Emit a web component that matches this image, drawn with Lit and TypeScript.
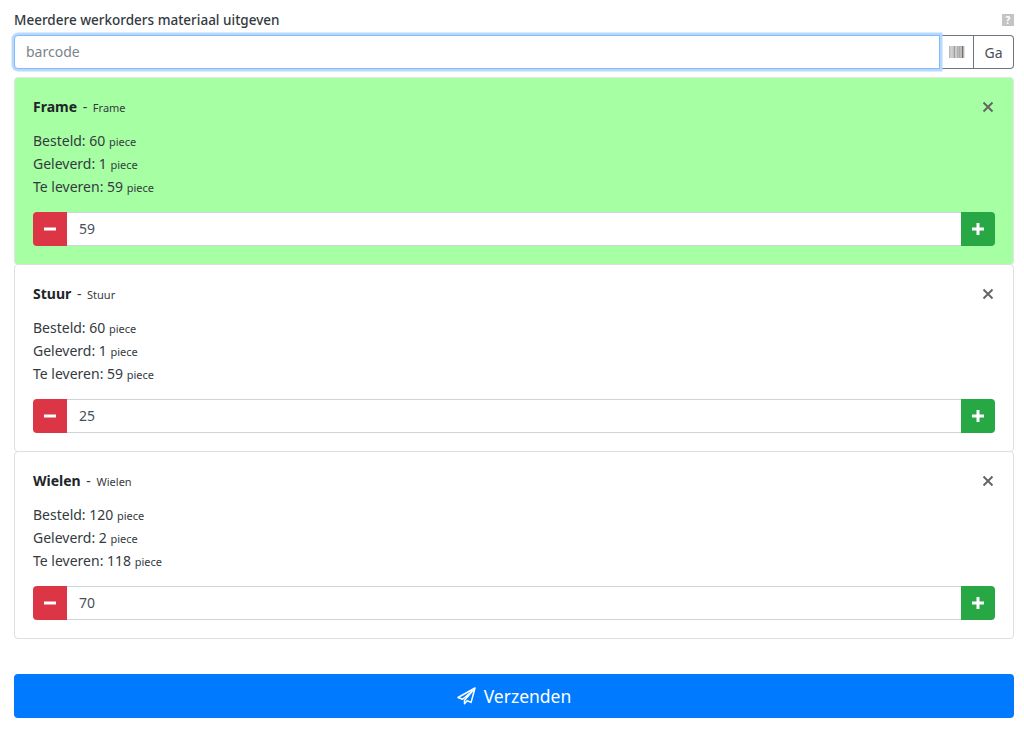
import { LitElement, html, css, svg } from "lit";
import { customElement } from "lit/decorators.js";

const items = [
  { name: "Frame", ordered: 60, delivered: 1, todo: 59, value: 59, active: true },
  { name: "Stuur", ordered: 60, delivered: 1, todo: 59, value: 25, active: false },
  { name: "Wielen", ordered: 120, delivered: 2, todo: 118, value: 70, active: false },
];

const barColors = ["#b9b9b9", "#c9a9a0", "#9fb5c9", "#a9c0a9", "#888", "#c0a9b9", "#8fa0b5", "#b5b59f", "#777", "#a0a0a0", "#6f6f6f", "#999"];

@customElement("app-root")
export class AppRoot extends LitElement {
  static styles = css`
    :host {
      display: block;
      box-sizing: border-box;
      height: 734px;
      padding: 11px 10px 0 14px;
      background: #fff;
      color: #212529;
      font-family: "Noto Sans", "Open Sans", sans-serif;
      font-size: 14px;
    }
    * { box-sizing: border-box; }
    .head {
      display: flex;
      justify-content: space-between;
      align-items: center;
      height: 18px;
      margin-bottom: 6px;
    }
    .title { font-size: 13.5px; font-weight: 500; color: #343a40; }
    .help {
      width: 12px; height: 12px; background: #c4c4c4; color: #fff;
      font-size: 10px; font-weight: 700; line-height: 12px; text-align: center;
    }
    .search { display: flex; height: 34px; margin-bottom: 8px; }
    .search-input {
      flex: 1; min-width: 0; border: 1px solid #80bdff; border-radius: 4px 0 0 4px;
      box-shadow: 0 0 0 2.5px #b8d9fd; padding: 0 11px; line-height: 32px;
      font-size: 14px; color: #7b838a; position: relative; z-index: 1; background: #fff;
    }
    .addon {
      border: 1px solid #6c757d; border-left: 0; display: flex; align-items: center;
      justify-content: center; background: #fff; color: #495057; font-size: 14px;
    }
    .scan { width: 34px; }
    .go { width: 40px; border-radius: 0 4px 4px 0; }
    .card {
      height: 188px; margin-bottom: -1px; border: 1px solid #dfdfdf; border-radius: 4px;
      padding: 19px 18px 18px; background: #fff; display: flex; flex-direction: column;
    }
    .card.active { background: #a6ffa3; border-color: #e2e5e2; }
    .top { display: flex; justify-content: space-between; align-items: center; height: 22px; margin-bottom: 14px; }
    .name { font-size: 14px; font-weight: 700; color: #212529; }
    .sub { font-size: 11px; color: #343a40; }
    .dash { color: #343a40; padding: 0 2px; }
    .close { width: 12px; height: 12px; margin-right: 1px; display: block; }
    .line { font-size: 14px; line-height: 22px; color: #343a40; }
    .line small { font-size: 11px; }
    .stepper { display: flex; height: 34px; margin-top: 13px; }
    .btn {
      width: 34px; flex: none; display: flex; align-items: center; justify-content: center;
    }
    .minus { background: #dc3545; border-radius: 4px 0 0 4px; }
    .plus { background: #28a745; border-radius: 0 4px 4px 0; }
    .value {
      flex: 1; min-width: 0; background: #fff; border: 1px solid #ced4da; border-width: 1px 0;
      padding: 0 12px; line-height: 32px; font-size: 14px; color: #495057;
    }
    .send {
      display: flex; align-items: center; justify-content: center; gap: 8px;
      height: 44px; margin-top: 36px; border-radius: 4px; background: #007bff;
      color: #fff; font-size: 17.5px;
    }
    .send svg { display: block; }
  `;

  private barcode() {
    return html`<svg width="16" height="12" viewBox="0 0 16 12" aria-hidden="true">
      ${barColors.map((c, i) => svg`<rect x=${i * 1.3} y="0" width="1" height="12" fill=${c}></rect>`)}
    </svg>`;
  }

  private card(it: (typeof items)[number]) {
    return html`<div class="card ${it.active ? "active" : ""}">
      <div class="top">
        <div><span class="name">${it.name}</span> <span class="dash">-</span> <span class="sub">${it.name}</span></div>
        <svg class="close" viewBox="0 0 12 12" aria-hidden="true"><path d="M1.5 1.5l9 9M10.5 1.5l-9 9" stroke="#666" stroke-width="2" fill="none"></path></svg>
      </div>
      <div class="line">Besteld: ${it.ordered} <small>piece</small></div>
      <div class="line">Geleverd: ${it.delivered} <small>piece</small></div>
      <div class="line">Te leveren: ${it.todo} <small>piece</small></div>
      <div class="stepper">
        <div class="btn minus"><svg width="12" height="12" viewBox="0 0 12 12" aria-hidden="true"><path d="M0 6h12" stroke="#fff" stroke-width="3"></path></svg></div>
        <div class="value">${it.value}</div>
        <div class="btn plus"><svg width="12" height="12" viewBox="0 0 12 12" aria-hidden="true"><path d="M0 6h12M6 0v12" stroke="#fff" stroke-width="3"></path></svg></div>
      </div>
    </div>`;
  }

  render() {
    return html`
      <div class="head"><span class="title">Meerdere werkorders materiaal uitgeven</span><span class="help">?</span></div>
      <div class="search">
        <div class="search-input">barcode</div>
        <div class="addon scan">${this.barcode()}</div>
        <div class="addon go">Ga</div>
      </div>
      ${items.map((it) => this.card(it))}
      <div class="send">
        <svg width="19" height="18" viewBox="0 0 19 18" aria-hidden="true"><path d="M18 1L1 10.5l4.5 1.8L16 3.5 7.5 13.2v3.6l2.6-3 4 1.6z" fill="none" stroke="#fff" stroke-width="1.5" stroke-linejoin="round"></path></svg>
        <span>Verzenden</span>
      </div>
    `;
  }
}
